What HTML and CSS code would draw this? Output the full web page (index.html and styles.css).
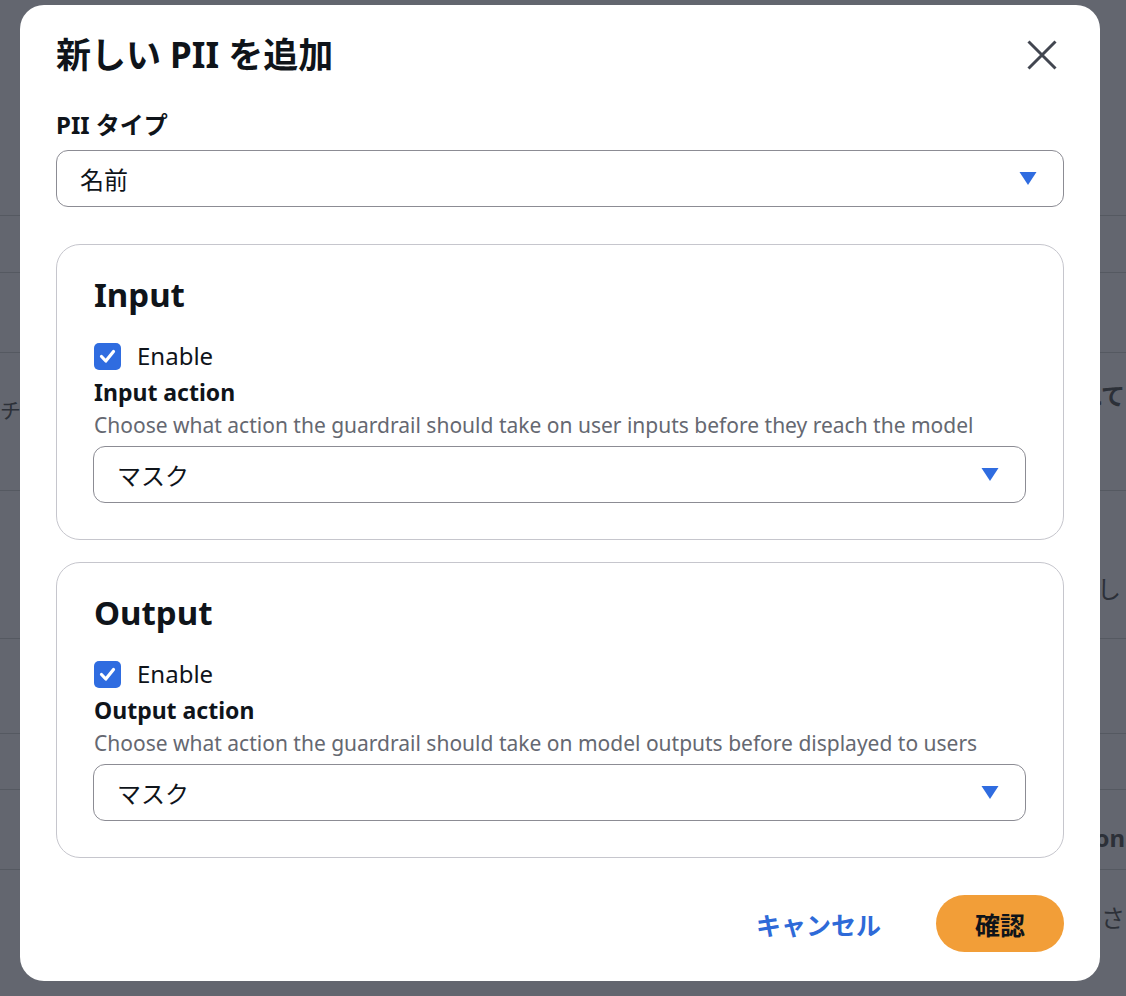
FILE: index.html
```html
<!DOCTYPE html>
<html lang="ja">
  <head>
    <meta charset="UTF-8" />
    <meta name="viewport" content="width=device-width, initial-scale=1.0" />
    <title>新しい PII を追加</title>
    <link rel="stylesheet" href="styles.css">
  </head>
  <body>
    <!-- page behind the dialog, dimmed -->
    <div class="page">
      <div class="bg-row bg-row-1"></div>
      <div class="bg-row bg-row-2"></div>
      <div class="bg-row bg-row-3"></div>
      <div class="bg-row bg-row-4"></div>
      <div class="bg-row bg-row-5">
        <span class="bg-left">チ</span>
        <span class="bg-right bg-bold">されて</span>
      </div>
      <div class="bg-row bg-row-6">
        <span class="bg-left"></span>
        <span class="bg-right bg-right-short">表示し</span>
      </div>
      <div class="bg-row bg-row-7"></div>
      <div class="bg-row bg-row-8"></div>
      <div class="bg-row bg-row-9">
        <span class="bg-left"></span>
        <span class="bg-right bg-bold">Action</span>
      </div>
      <div class="bg-row bg-row-10">
        <span class="bg-left"></span>
        <span class="bg-right">表示さ</span>
      </div>
    </div>

    <div class="modal" role="dialog">
      <div class="modal-header">
        <h2 class="modal-title">新しい PII を追加</h2>
        <button class="close-button" aria-label="閉じる">
          <svg width="30" height="30" viewBox="0 0 30 30">
            <path d="M1.5 1.5 L28.5 28.5 M28.5 1.5 L1.5 28.5" stroke="#424650" stroke-width="3" fill="none" />
          </svg>
        </button>
      </div>

      <div class="field-label">PII タイプ</div>
      <div class="select">
        <span>名前</span>
        <svg class="caret" width="18" height="15" viewBox="0 0 18 15">
          <path d="M0.5 1 L17.5 1 L9 14 Z" fill="#2f6ce0" />
        </svg>
      </div>

      <div class="panel">
        <h3 class="panel-title">Input</h3>
        <label class="checkbox-row">
          <span class="checkbox">
            <svg width="27" height="27" viewBox="0 0 27 27">
              <path d="M7.5 13.5 L11.8 18 L19.5 8.5" stroke="#fff" stroke-width="3.2" fill="none" stroke-linecap="round" stroke-linejoin="round" />
            </svg>
          </span>
          Enable
        </label>
        <div class="action-label">Input action</div>
        <div class="action-desc">Choose what action the guardrail should take on user inputs before they reach the model</div>
        <div class="select select-inner">
          <span>マスク</span>
          <svg class="caret" width="18" height="15" viewBox="0 0 18 15">
            <path d="M0.5 1 L17.5 1 L9 14 Z" fill="#2f6ce0" />
          </svg>
        </div>
      </div>

      <div class="panel panel-output">
        <h3 class="panel-title">Output</h3>
        <label class="checkbox-row">
          <span class="checkbox">
            <svg width="27" height="27" viewBox="0 0 27 27">
              <path d="M7.5 13.5 L11.8 18 L19.5 8.5" stroke="#fff" stroke-width="3.2" fill="none" stroke-linecap="round" stroke-linejoin="round" />
            </svg>
          </span>
          Enable
        </label>
        <div class="action-label">Output action</div>
        <div class="action-desc">Choose what action the guardrail should take on model outputs before displayed to users</div>
        <div class="select select-inner">
          <span>マスク</span>
          <svg class="caret" width="18" height="15" viewBox="0 0 18 15">
            <path d="M0.5 1 L17.5 1 L9 14 Z" fill="#2f6ce0" />
          </svg>
        </div>
      </div>

      <div class="modal-footer">
        <button class="cancel-button">キャンセル</button>
        <button class="confirm-button">確認</button>
      </div>
    </div>
  </body>
</html>
```

FILE: styles.css
```css
body {
  margin: 0;
  height: 996px;
  overflow: hidden;
  background-color: #63666f;
  color: #0f141a;
  font-family: "Noto Sans", "Noto Sans CJK JP", sans-serif;
}

/* dimmed page behind */
.page {
  width: 1126px;
}

.bg-row {
  box-sizing: border-box;
  display: flex;
  justify-content: space-between;
  border-bottom: 1px solid #555961;
  color: #2c3038;
  font-size: 24px;
  line-height: 26px;
}

.bg-row-1 { height: 121px; border-bottom: none; }
.bg-row-2 { height: 95px; }
.bg-row-3 { height: 57px; }
.bg-row-4 { height: 80px; }
.bg-row-5 { height: 138px; padding-top: 30px; }
.bg-row-6 { height: 148px; padding-top: 85px; }
.bg-row-7 { height: 95px; }
.bg-row-8 { height: 56px; }
.bg-row-9 { height: 80px; padding-top: 35px; }
.bg-row-10 { height: 127px; padding-top: 35px; border-bottom: none; }

.bg-row-5 .bg-left {
  padding-top: 14px;
  font-size: 21px;
}

.bg-left {
  width: 18px;
  white-space: nowrap;
}

.bg-right {
  display: flex;
  justify-content: flex-end;
  width: 100px;
  padding-right: 1px;
  white-space: nowrap;
}

.bg-right-short {
  padding-right: 5px;
}

.bg-bold {
  font-weight: bold;
}

/* dialog */
.modal {
  position: absolute;
  top: 5px;
  left: 20px;
  width: 1080px;
  box-sizing: border-box;
  padding: 29px 36px 29px;
  background-color: white;
  border-radius: 24px;
}

.modal-header {
  display: flex;
  justify-content: space-between;
  align-items: center;
  height: 42px;
}

.modal-title {
  margin: 0;
  font-size: 35px;
  line-height: 42px;
  font-weight: bold;
}

.close-button {
  display: flex;
  padding: 0;
  margin-right: 7px;
  border: none;
  background-color: transparent;
  cursor: pointer;
}

.field-label {
  margin-top: 34px;
  font-size: 24px;
  line-height: 30px;
  font-weight: bold;
}

.select {
  display: flex;
  justify-content: space-between;
  align-items: center;
  box-sizing: border-box;
  height: 57px;
  margin-top: 10px;
  padding: 0 26px 0 23px;
  border: 1px solid #8c8c94;
  border-radius: 12px;
  font-size: 24px;
}

.select-inner {
  margin-top: 7px;
  margin-left: -1px;
}

.panel {
  margin-top: 37px;
  padding: 28px 37px 36px;
  border: 1px solid #c6c6cd;
  border-radius: 24px;
}

.panel-output {
  margin-top: 22px;
}

.panel-title {
  margin: 0;
  font-size: 33px;
  line-height: 44px;
  font-weight: bold;
}

.checkbox-row {
  display: flex;
  align-items: center;
  gap: 16px;
  margin-top: 23px;
  font-size: 24px;
  line-height: 32px;
}

.checkbox {
  display: flex;
  width: 27px;
  height: 27px;
  border-radius: 5px;
  background-color: #2f6ce0;
}

.action-label {
  margin-top: 5px;
  font-size: 23px;
  line-height: 30px;
  font-weight: bold;
}

.action-desc {
  margin-top: 4px;
  font-size: 21px;
  line-height: 28px;
  color: #656871;
}

.modal-footer {
  display: flex;
  justify-content: flex-end;
  align-items: center;
  margin-top: 37px;
}

.cancel-button {
  margin-right: 55px;
  padding: 0;
  border: none;
  background-color: transparent;
  color: #2e6ad8;
  font-family: inherit;
  font-size: 25px;
  font-weight: bold;
  cursor: pointer;
}

.confirm-button {
  width: 128px;
  height: 57px;
  border: none;
  border-radius: 29px;
  background-color: #f29e38;
  color: #0f141a;
  font-family: inherit;
  font-size: 25px;
  font-weight: bold;
  cursor: pointer;
}
```
